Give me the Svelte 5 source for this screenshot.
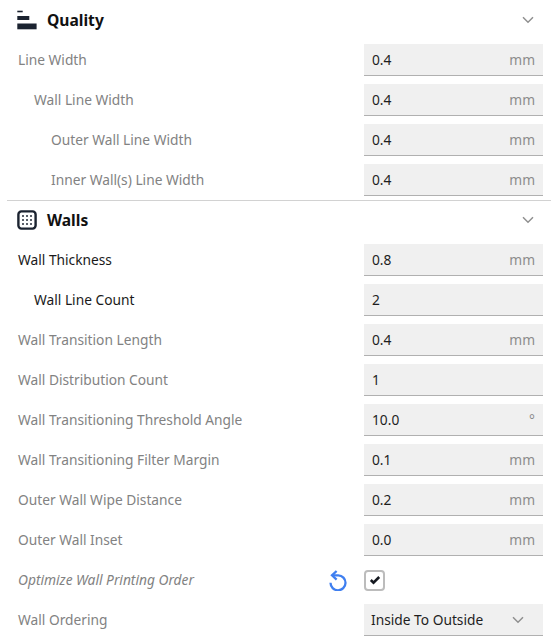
<script>
  const quality = [
    { label: 'Line Width', indent: 0, value: '0.4', unit: 'mm' },
    { label: 'Wall Line Width', indent: 1, value: '0.4', unit: 'mm' },
    { label: 'Outer Wall Line Width', indent: 2, value: '0.4', unit: 'mm' },
    { label: 'Inner Wall(s) Line Width', indent: 2, value: '0.4', unit: 'mm' }
  ];

  const walls = [
    { label: 'Wall Thickness', indent: 0, value: '0.8', unit: 'mm', dark: true },
    { label: 'Wall Line Count', indent: 1, value: '2', unit: '', dark: true },
    { label: 'Wall Transition Length', indent: 0, value: '0.4', unit: 'mm' },
    { label: 'Wall Distribution Count', indent: 0, value: '1', unit: '' },
    { label: 'Wall Transitioning Threshold Angle', indent: 0, value: '10.0', unit: '°' },
    { label: 'Wall Transitioning Filter Margin', indent: 0, value: '0.1', unit: 'mm' },
    { label: 'Outer Wall Wipe Distance', indent: 0, value: '0.2', unit: 'mm' },
    { label: 'Outer Wall Inset', indent: 0, value: '0.0', unit: 'mm' }
  ];
</script>

{#snippet chevron()}
  <svg class="chevron" width="12" height="8" viewBox="0 0 12 8">
    <path d="M1 1.2 L6 6.2 L11 1.2" fill="none" stroke="#8f8f8f" stroke-width="1.5" />
  </svg>
{/snippet}

{#snippet row(item)}
  <div class="row">
    <span class="label indent-{item.indent}" class:dark={item.dark}>{item.label}</span>
    <div class="field">
      <span>{item.value}</span>
      <span class="unit">{item.unit}</span>
    </div>
  </div>
{/snippet}

<div class="panel">
  <div class="header">
    <svg class="icon" width="20" height="20" viewBox="0 0 20 20">
      <rect x="0.3" y="0.7" width="5.4" height="1.6" fill="#1b2330" />
      <rect x="0.3" y="6" width="12" height="4" fill="#1b2330" />
      <rect x="0.3" y="13.5" width="19.3" height="5.8" fill="#1b2330" />
    </svg>
    <span class="title">Quality</span>
    <span class="toggle">{@render chevron()}</span>
  </div>
  {#each quality as item}
    {@render row(item)}
  {/each}

  <div class="header divided">
    <svg class="icon" width="20" height="20" viewBox="0 0 20 20">
      <rect x="1.4" y="1.4" width="17.2" height="17.2" rx="3" fill="none" stroke="#1b2330" stroke-width="2.4" />
      <g fill="#5b616a">
        <rect x="5" y="5" width="2" height="2" />
        <rect x="9" y="5" width="2" height="2" />
        <rect x="13" y="5" width="2" height="2" />
        <rect x="5" y="9" width="2" height="2" />
        <rect x="9" y="9" width="2" height="2" />
        <rect x="13" y="9" width="2" height="2" />
        <rect x="5" y="13" width="2" height="2" />
        <rect x="9" y="13" width="2" height="2" />
        <rect x="13" y="13" width="2" height="2" />
      </g>
    </svg>
    <span class="title">Walls</span>
    <span class="toggle">{@render chevron()}</span>
  </div>
  {#each walls as item}
    {@render row(item)}
  {/each}

  <div class="row">
    <span class="label italic">Optimize Wall Printing Order</span>
    <svg class="reset" width="18" height="21" viewBox="0 0 18 21">
      <path d="M3.2 5.3 H9.2 A7.5 7.5 0 1 1 1.5 12.8" fill="none" stroke="#3f7ff0" stroke-width="2.3" />
      <path d="M7.6 1 L3 5.3 L7.6 9.6" fill="none" stroke="#3f7ff0" stroke-width="2.3" />
    </svg>
    <div class="check">
      <svg width="12" height="10" viewBox="0 0 12 10">
        <path d="M1.8 5 L4.5 7.6 L10.2 2" fill="none" stroke="#14181f" stroke-width="2.6" />
      </svg>
    </div>
  </div>

  <div class="row">
    <span class="label">Wall Ordering</span>
    <div class="field select">
      <span>Inside To Outside</span>
      {@render chevron()}
    </div>
  </div>
</div>

<style>
  :global(body) {
    background: #fff;
  }

  .panel {
    width: 551px;
    height: 637px;
    overflow: hidden;
    font-family: "Noto Sans", sans-serif;
    font-size: 13.75px;
  }

  .header {
    display: flex;
    align-items: center;
    height: 40px;
    box-sizing: border-box;
    padding-left: 17px;
  }

  .header.divided {
    margin-left: 7px;
    padding: 0 0 1px 10px;
    border-top: 1px solid #d2d2d2;
  }

  .icon {
    flex: none;
    margin-right: 10px;
  }

  .title {
    font-size: 15.6px;
    font-weight: 700;
    color: #111;
  }

  .toggle {
    margin-left: auto;
    margin-right: 17px;
    display: flex;
  }

  .row {
    display: flex;
    align-items: center;
    height: 40px;
    padding-left: 18px;
  }

  .label {
    color: #828282;
    flex: 1;
    padding-bottom: 1px;
  }

  .indent-1 {
    padding-left: 16px;
  }

  .indent-2 {
    padding-left: 33px;
  }

  .dark {
    color: #1a1a1a;
  }

  .italic {
    font-style: italic;
  }

  .field {
    flex: none;
    display: flex;
    justify-content: space-between;
    align-items: center;
    width: 179px;
    height: 32px;
    margin-right: 8px;
    padding: 0 8px;
    box-sizing: border-box;
    background: #f0f0f0;
    border-bottom: 1px solid #b0b0b0;
    color: #1e1e1e;
  }

  .unit {
    color: #8c8c8c;
  }

  .select {
    padding: 0 19px 0 7px;
  }

  .reset {
    flex: none;
    margin-right: 17px;
  }

  .check {
    flex: none;
    display: flex;
    align-items: center;
    justify-content: center;
    width: 21px;
    height: 21px;
    margin-right: 166px;
    box-sizing: border-box;
    border: 2px solid #bcbcbc;
    border-radius: 4px;
  }
</style>
